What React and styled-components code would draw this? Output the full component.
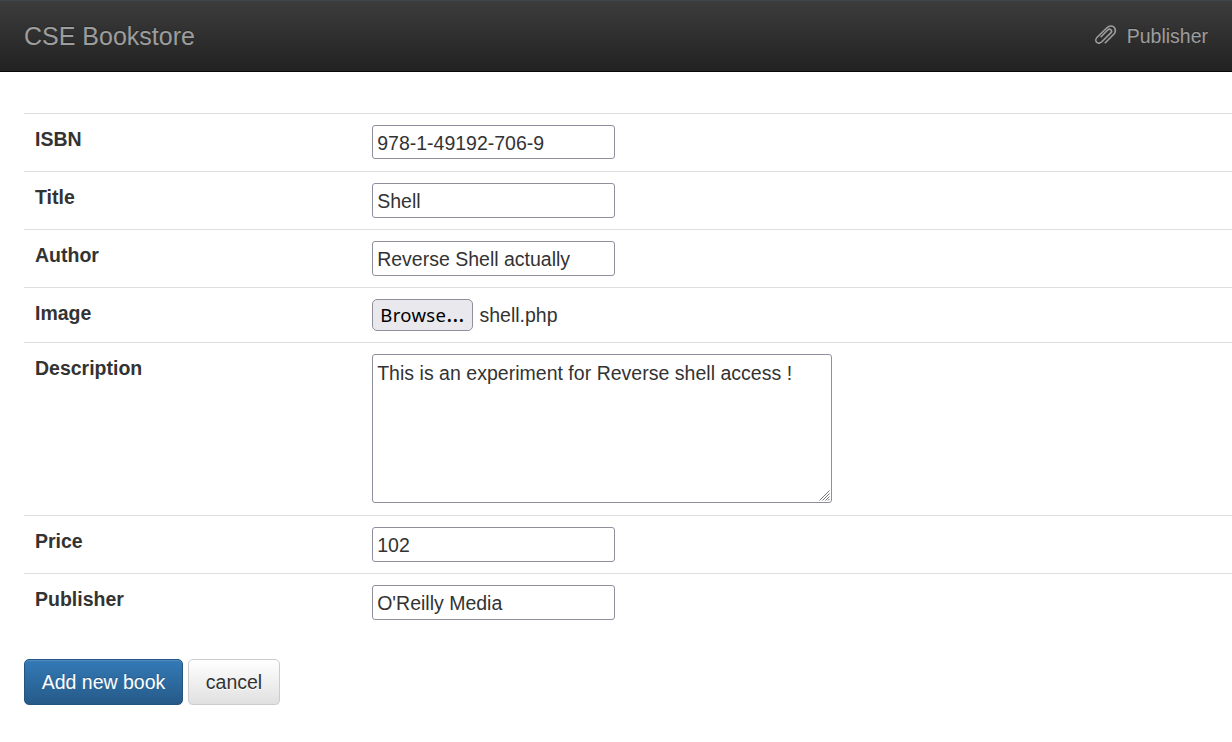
import React from "react";
import styled, { createGlobalStyle, css } from "styled-components";

const GlobalStyle = createGlobalStyle`
  *, *::before, *::after { box-sizing: border-box; }
  body {
    margin: 0;
    background: #fff;
    color: #333;
    font: 19.5px/28px "Liberation Sans", Helvetica, Arial, sans-serif;
    overflow: hidden;
  }
`;

const Navbar = styled.nav`
  display: flex;
  align-items: center;
  justify-content: space-between;
  height: 72px;
  padding: 0 24px;
  border-top: 1px solid #3f4451;
  border-bottom: 1px solid #080808;
  background: linear-gradient(to bottom, #3c3c3c, #222);
  color: #9d9d9d;
  text-shadow: 0 -1px 0 rgba(0, 0, 0, 0.25);
`;

const Brand = styled.span`
  font-size: 25px;
`;

const NavLink = styled.span`
  display: flex;
  align-items: center;
  gap: 9.7px;
`;

const ClipIcon = styled.svg`
  width: 23px;
  height: 23px;
  margin-top: -1px;
  fill: none;
  stroke: currentColor;
  stroke-width: 1.6;
  stroke-linecap: butt;
  stroke-linejoin: round;
`;

const Form = styled.form`
  padding: 41px 0 0 24px;
`;

const Row = styled.div`
  display: grid;
  grid-template-columns: 337px 1fr;
  align-items: start;
  height: ${(p) => p.$height || 58}px;
  padding: 11px;
  border-top: 1px solid #ddd;
`;

const Label = styled.label`
  font-weight: 700;
`;

const field = css`
  display: block;
  margin: 0;
  border: 1px solid #8f8f9d;
  border-radius: 3px;
  outline: none;
  background: #fff;
  color: #333;
  font: inherit;
`;

const TextInput = styled.input`
  ${field}
  width: 243px;
  height: ${(p) => p.$height || 35}px;
  padding: 2px 4px 0 4.2px;
`;

const AreaFrame = styled.div`
  position: relative;
  width: 460px;
  height: 149px;
`;

const TextArea = styled.textarea`
  ${field}
  width: 100%;
  height: 100%;
  padding: 4px 4px 4px 4.2px;
  letter-spacing: 0.02px;
  resize: none;
`;

const Grip = styled.svg`
  position: absolute;
  right: 2px;
  bottom: 2px;
  width: 11px;
  height: 11px;
  stroke: #777;
  stroke-width: 1;
`;

const FilePicker = styled.div`
  display: flex;
  align-items: center;
  gap: 6.5px;
  height: 32px;
`;

const BrowseButton = styled.button`
  width: 101px;
  height: 32px;
  padding: 0;
  border: 1px solid #8f8f9d;
  border-radius: 5px;
  background: #e9e9ed;
  color: #000;
  font: 18.5px/28px "Noto Sans", sans-serif;
  letter-spacing: 0.3px;
`;

const Ellipsis = styled.span`
  font-size: 23px;
  line-height: 1;
`;

const Actions = styled.div`
  display: flex;
  gap: 5px;
  margin-top: 28px;
`;

const Button = styled.button`
  width: ${(p) => p.$width}px;
  height: 46px;
  padding: 0;
  border: 1px solid #ccc;
  border-radius: 5px;
  background: linear-gradient(to bottom, #fff, #e0e0e0);
  color: #333;
  font: inherit;
  text-shadow: 0 1px 0 #fff;
  box-shadow: inset 0 1px 0 rgba(255, 255, 255, 0.15), 0 1px 1px rgba(0, 0, 0, 0.075);
  ${(p) =>
    p.$primary &&
    css`
      border-color: #245580;
      background: linear-gradient(to bottom, #337ab7, #265a88);
      color: #fff;
      text-shadow: 0 -1px 0 rgba(0, 0, 0, 0.2);
    `}
`;

function Field({ id, label, value, height }) {
  return (
    <Row>
      <Label htmlFor={id}>{label}</Label>
      <TextInput id={id} defaultValue={value} $height={height} spellCheck={false} />
    </Row>
  );
}

export default function App() {
  return (
    <>
      <GlobalStyle />
      <Navbar>
        <Brand>CSE Bookstore</Brand>
        <NavLink>
          <ClipIcon viewBox="0 0 23 23" aria-hidden="true">
            <path d="M10.8 19.3 L19.8 10.2 C22.6 7.2 21.4 2 17 2 C14.8 2 13.6 3 12.4 4.2 L3.2 13.2 C1.6 14.8 1.4 17 2.6 18.2 C3.9 19.6 6.3 19.3 7.8 17.8 L16.8 8.9 C18.9 6.6 16 3.8 13.7 6 L6.6 13.2" />
          </ClipIcon>
          Publisher
        </NavLink>
      </Navbar>
      <Form>
        <Field id="isbn" label="ISBN" value="978-1-49192-706-9" height={34} />
        <Field id="title" label="Title" value="Shell" />
        <Field id="author" label="Author" value="Reverse Shell actually" />
        <Row $height={55}>
          <Label>Image</Label>
          <FilePicker>
            <BrowseButton type="button">Browse<Ellipsis>…</Ellipsis></BrowseButton>
            <span>shell.php</span>
          </FilePicker>
        </Row>
        <Row $height={173}>
          <Label htmlFor="description">Description</Label>
          <AreaFrame>
            <TextArea
              id="description"
              spellCheck={false}
              defaultValue="This is an experiment for Reverse shell access !"
            />
            <Grip viewBox="0 0 11 11" aria-hidden="true">
              <path d="M.5 10.5 10.5 .5M3.5 10.5l7-7M6.5 10.5l4-4M9 10.5l1.5-1.5" />
            </Grip>
          </AreaFrame>
        </Row>
        <Field id="price" label="Price" value="102" />
        <Field id="publisher" label="Publisher" value="O'Reilly Media" />
        <Actions>
          <Button type="button" $primary $width={159}>Add new book</Button>
          <Button type="button" $width={92}>cancel</Button>
        </Actions>
      </Form>
    </>
  );
}
